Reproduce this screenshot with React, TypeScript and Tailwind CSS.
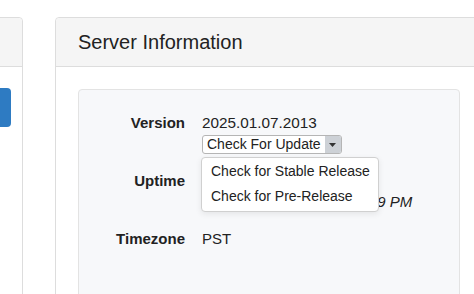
import React from "react";

export default function App() {
  return (
    <div
      className="w-[474px] h-[294px] overflow-hidden bg-white flex items-start pt-[17px] text-[#222]"
      style={{ fontFamily: '"Liberation Sans", Arial, sans-serif' }}
    >
      {/* Left panel (partially off screen) */}
      <div className="shrink-0 ml-[-100px] w-[123px] h-[400px] border border-[#dddddd] rounded-[4px] bg-white">
        <div className="h-[49px] bg-[#f5f5f5] border-b border-[#dddddd] rounded-t-[4px]" />
        <div className="pt-[21px]">
          <div className="ml-[69px] w-[41px] h-[39px] bg-[#2e7bc2] rounded-[4px]" />
        </div>
      </div>

      {/* Server Information panel */}
      <div className="shrink-0 ml-[32px] w-[427px] h-[400px] border border-[#dddddd] rounded-t-[4px] bg-white">
        <div className="h-[49px] bg-[#f5f5f5] border-b border-[#dddddd] rounded-t-[4px] pl-[22px] py-[12px]">
          <h3 className="text-[20px] leading-[24px] text-[#222]">Server Information</h3>
        </div>
        <div className="pt-[22px] pl-[22px]">
          <div className="w-[382px] h-[300px] border border-[#e3e3e3] rounded-[4px] bg-[#f7f8fa] pt-[22px]">
            <div className="grid grid-cols-[106px_1fr] gap-x-[17px] gap-y-[16px] text-[15px] leading-[21px]">
              <div className="text-right font-bold">Version</div>
              <div>
                <div className="text-[15.3px]">2025.01.07.2013</div>
                <div className="relative mt-[2px] w-fit">
                  <div className="flex h-[19px] border border-[#b5b5b5] rounded-[3px] bg-white overflow-hidden">
                    <span className="pl-[4px] pr-[4px] text-[14px] leading-[17px]">Check For Update</span>
                    <span className="w-[16px] bg-[#cdd1d6] flex items-center justify-center">
                      <svg width="7" height="4" viewBox="0 0 7 4">
                        <path d="M0 0 L7 0 L3.5 4 Z" fill="#333" />
                      </svg>
                    </span>
                  </div>
                  <div className="absolute left-[-1px] top-[22px] w-[178px] h-[55px] z-10 bg-white border border-[#d0d0d0] rounded-[4px] shadow-[0_2px_6px_rgba(0,0,0,0.08)] pt-[1px] text-[14px] leading-[25px] whitespace-nowrap">
                    <div className="px-[9px] h-[25px]">Check for Stable Release</div>
                    <div className="px-[9px] h-[25px]">Check for Pre-Release</div>
                  </div>
                </div>
              </div>

              <div className="text-right font-bold">Uptime</div>
              <div className="whitespace-nowrap">
                <div className="h-[21px]" />
                <div className="italic">Since 01/07/2025, 08:13:49 PM</div>
              </div>

              <div className="text-right font-bold">Timezone</div>
              <div>PST</div>
            </div>
          </div>
        </div>
      </div>
    </div>
  );
}
